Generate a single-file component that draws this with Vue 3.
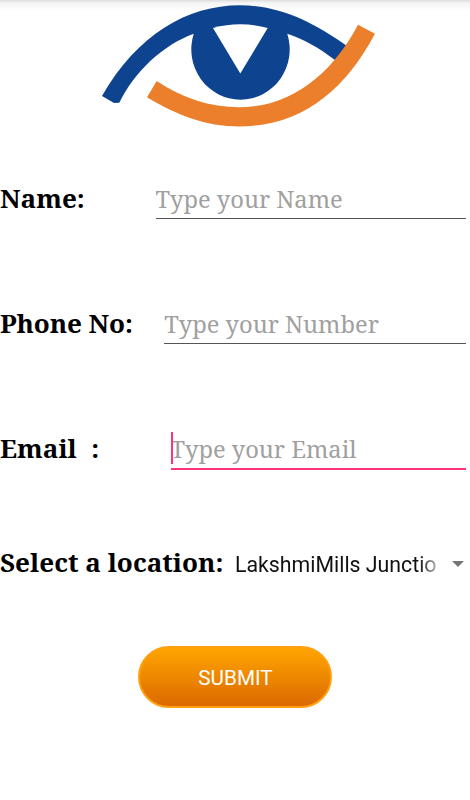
<script setup>
import { ref } from 'vue'

const fields = ref([
  { id: 'name', label: 'Name:', hint: 'Type your Name', value: '' },
  { id: 'phone', label: 'Phone No:', hint: 'Type your Number', value: '' },
  { id: 'email', label: 'Email\u00a0 :', hint: 'Type your Email', value: '' }
])
const active = ref('email')
const location = ref('LakshmiMills Junctio')
</script>
<template>
<main>
  <header>
    <svg class="logo" viewBox="0 0 470 140">
      <path fill="#0e448f" d="M102 96 C137 35 187 5.300 240 5.300 C280 5.300 313 22 347 46 L335 60 C319 48 304 39 287.300 33.700 A49.200 50.400 0 1 1 193.700 33.700 C163 45 135 71 119.300 102.700 L114 103 Z" />
      <path fill="#fff" d="M213 28 Q240 20.500 267.700 28 L240.300 73.500 Z" />
      <path fill="#eb7f2c" d="M156.700 81 C182 98 210 107.300 239 107.300 C293 107.300 334 71 358 24.700 L375 33.700 C344 92 300 126.500 239 126.500 C206 126.500 176 115 147 97.300 Z" />
    </svg>
  </header>
  <form @submit.prevent>
    <div class="row" :class="field.id" v-for="field in fields" :key="field.id">
      <label :for="field.id">{{ field.label }}</label>
      <div class="field" :class="{ active: active === field.id }">
        <input :id="field.id" v-model="field.value" :placeholder="field.hint" @focus="active = field.id">
        <span class="caret" v-if="active === field.id"></span>
      </div>
    </div>
    <div class="row location">
      <label>Select a location:</label>
      <div class="spinner">
        <span class="picked">{{ location }}</span>
        <span class="arrow"></span>
      </div>
    </div>
    <button>SUBMIT</button>
  </form>
</main>
</template>
<style>
body{
  background-color: #fff;
}
</style>
<style scoped>
main{
  width: 470px;
  height: 800px;
  overflow: hidden;
  background-color: #fff;
  font-family: "Noto Serif", "Droid Serif", "DejaVu Serif Condensed", "DejaVu Serif", serif;
}
header{
  height: 156px;
  background: linear-gradient(#dcdcdc, #f5f5f5 3px, #fff 11px);
}
.logo{
  display: block;
  width: 470px;
  height: 140px;
}
form{
  display: flex;
  flex-direction: column;
}
.row{
  display: flex;
  height: 125px;
  padding-right: 4px;
}
label{
  flex: none;
  width: 155.600px;
  padding-top: 25px;
  font-size: 26.100px;
  line-height: 34px;
  font-weight: bold;
  color: #000;
  white-space: pre;
}
.phone label{
  width: 164.300px;
  letter-spacing: -0.1px;
}
.email label{
  width: 170.500px;
  word-spacing: 0.5px;
}
.field{
  position: relative;
  flex: 1;
  height: 62px;
  border-bottom: 1px solid #555;
}
.field.active{
  border-bottom: 2px solid #ff3379;
}
input{
  display: block;
  width: 100%;
  height: 34px;
  margin-top: 26px;
  padding: 0;
  border: none;
  outline: none;
  background: transparent;
  font-family: inherit;
  font-size: 23.700px;
  color: #000;
}
input::placeholder{
  color: #a0a0a0;
  opacity: 1;
}
.caret{
  position: absolute;
  left: 0;
  top: 26px;
  width: 2px;
  height: 32px;
  background-color: #ff3379;
}
.location{
  height: 115px;
}
.location label{
  width: 235px;
  padding-top: 14px;
}
.spinner{
  flex: 1;
  display: flex;
  align-items: center;
  justify-content: space-between;
  height: 34px;
  margin-top: 16px;
  padding-right: 2px;
  font-family: Roboto, sans-serif;
  font-size: 21.300px;
  color: #111;
}
.picked{
  width: 204px;
  white-space: nowrap;
  mask-image: linear-gradient(to right, #000 184px, transparent 210px);
}
.arrow{
  border-left: 6px solid transparent;
  border-right: 6px solid transparent;
  border-top: 6px solid #757575;
}
button{
  align-self: center;
  width: 194px;
  height: 62px;
  padding: 2px 0 0 1px;
  border: 2px solid #ffa011;
  border-radius: 32px;
  background: linear-gradient(#ffa500, #dc6900);
  font-family: Roboto, sans-serif;
  font-size: 20.700px;
  color: #fff;
}
</style>
